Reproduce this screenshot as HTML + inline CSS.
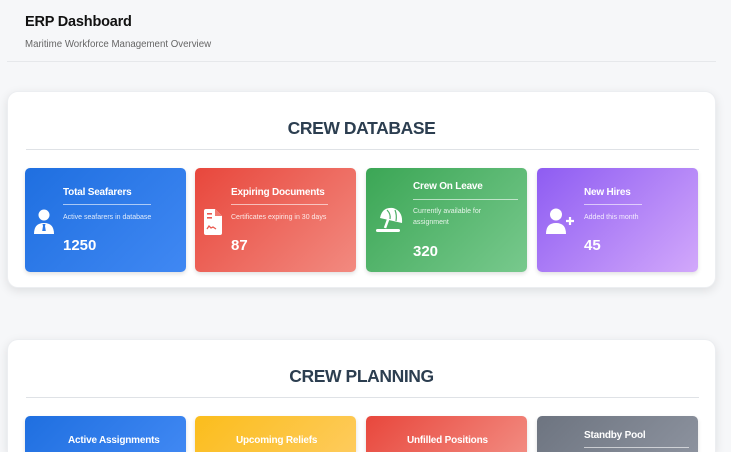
<!DOCTYPE html>
<html><head><meta charset="utf-8"><style>
*{margin:0;padding:0;box-sizing:border-box}
html,body{width:731px;height:452px;overflow:hidden}
body{background:#f6f7f9;font-family:"Liberation Sans",sans-serif;position:relative}
.a{position:absolute}
.h1{left:25px;top:14px;font-size:14.5px;font-weight:bold;color:#111;letter-spacing:-0.2px}
.sub{left:25px;top:39px;font-size:9.7px;color:#666}
.hr{left:7px;top:61px;width:709px;height:1px;background:#e6e8eb}
.panel{left:7px;width:709px;background:#fff;border-radius:11px;box-shadow:0 3px 10px rgba(0,0,0,.1);border:1px solid #eceef1}
.pt{left:0;width:100%;text-align:center;font-size:17.5px;font-weight:bold;color:#2c3e50;letter-spacing:-0.4px}
.pl{left:18px;width:673px;height:1px;background:#dfe2e6}
.card{width:161px;height:104px;border-radius:5px;color:#fff;box-shadow:0 2px 4px rgba(0,0,0,.12)}
.ct{font-size:10px;font-weight:bold;letter-spacing:-0.2px}
.ul{height:1px;background:rgba(255,255,255,.6)}
.cd{font-size:7px;color:rgba(255,255,255,.85);line-height:11px}
.cn{font-size:15px;font-weight:bold}
.blue{background:linear-gradient(135deg,#1f6fe0,#4088f3)}
.red{background:linear-gradient(135deg,#e8473c,#f28a80)}
.green{background:linear-gradient(135deg,#3ba655,#78c98d)}
.purple{background:linear-gradient(135deg,#8e5cf2,#d2a8fb)}
.yellow{background:linear-gradient(135deg,#fbbd1c,#fecb5c)}
.gray{background:linear-gradient(135deg,#6d7480,#8c929e)}
</style></head><body>
<div class="a h1">ERP Dashboard</div>
<div class="a sub">Maritime Workforce Management Overview</div>
<div class="a hr"></div>

<div class="a panel" style="top:91px;height:197px">
 <div class="a pt" style="top:26px">CREW DATABASE</div>
 <div class="a pl" style="top:57px"></div>
</div>

<div class="a card blue" style="left:25px;top:168px">
 <svg class="a" style="left:9px;top:41px" width="20" height="25" viewBox="0 0 20 25"><circle cx="10" cy="6" r="5.5" fill="#fff"/><path d="M0 25 Q0 14 10 14 Q20 14 20 25Z" fill="#fff"/><path d="M8.5 15h3l-.5 2 .8 5h-3.6l.8-5z" fill="#2a78e8"/></svg>
 <div class="a ct" style="left:38px;top:19px">Total Seafarers</div>
 <div class="a ul" style="left:38px;top:36px;width:88px"></div>
 <div class="a cd" style="left:38px;top:44px">Active seafarers in database</div>
 <div class="a cn" style="left:38px;top:69px">1250</div>
</div>
<div class="a card red" style="left:195px;top:168px">
 <svg class="a" style="left:9px;top:41px" width="18" height="26" viewBox="0 0 18 26"><path d="M0 2Q0 0 2 0H11L18 7V24Q18 26 16 26H2Q0 26 0 24Z" fill="#fff"/><path d="M11 0V7H18" fill="#f07a70"/><rect x="3" y="4" width="5" height="1.6" fill="#ea5a50"/><rect x="3" y="8" width="5" height="1.6" fill="#ea5a50"/><path d="M3 20l2-3 2 2 2-1 3 2" stroke="#ea5a50" stroke-width="1.3" fill="none"/></svg>
 <div class="a ct" style="left:36px;top:19px">Expiring Documents</div>
 <div class="a ul" style="left:36px;top:36px;width:97px"></div>
 <div class="a cd" style="left:36px;top:44px">Certificates expiring in 30 days</div>
 <div class="a cn" style="left:36px;top:69px">87</div>
</div>
<div class="a card green" style="left:366px;top:168px">
 <svg class="a" style="left:10px;top:38px" width="28" height="28" viewBox="0 0 28 28"><path d="M4 12Q6 1 17 2Q27 5 26 17Z" fill="#fff"/><path d="M13 11L9 22" stroke="#fff" stroke-width="2.5"/><rect x="0" y="23" width="24" height="3" rx="1.5" fill="#fff"/><path d="M11 4Q15 8 14 13M19 4Q21 9 20 15" stroke="#4cae64" stroke-width="1.2" fill="none"/></svg>
 <div class="a ct" style="left:47px;top:13px">Crew On Leave</div>
 <div class="a ul" style="left:47px;top:31px;width:105px"></div>
 <div class="a cd" style="left:47px;top:38px">Currently available for<br>assignment</div>
 <div class="a cn" style="left:47px;top:75px">320</div>
</div>
<div class="a card purple" style="left:537px;top:168px">
 <svg class="a" style="left:9px;top:40px" width="28" height="26" viewBox="0 0 28 26"><circle cx="10" cy="6.5" r="6" fill="#fff"/><path d="M0 26Q0 15 10 15Q20 15 20 26Z" fill="#fff"/><path d="M24 9v8M20 13h8" stroke="#fff" stroke-width="2.2"/></svg>
 <div class="a ct" style="left:47px;top:19px">New Hires</div>
 <div class="a ul" style="left:47px;top:36px;width:58px"></div>
 <div class="a cd" style="left:47px;top:44px">Added this month</div>
 <div class="a cn" style="left:47px;top:69px">45</div>
</div>

<div class="a panel" style="top:339px;height:113px;border-bottom:none;border-radius:11px 11px 0 0">
 <div class="a pt" style="top:26px">CREW PLANNING</div>
 <div class="a pl" style="top:57px"></div>
</div>
<div class="a card blue" style="left:25px;top:416px;height:36px;border-radius:5px 5px 0 0"><div class="a ct" style="left:43px;top:19px">Active Assignments</div></div>
<div class="a card yellow" style="left:195px;top:416px;height:36px;border-radius:5px 5px 0 0"><div class="a ct" style="left:41px;top:19px">Upcoming Reliefs</div></div>
<div class="a card red" style="left:366px;top:416px;height:36px;border-radius:5px 5px 0 0"><div class="a ct" style="left:41px;top:19px">Unfilled Positions</div></div>
<div class="a card gray" style="left:537px;top:416px;height:36px;border-radius:5px 5px 0 0"><div class="a ct" style="left:47px;top:14px">Standby Pool</div><div class="a ul" style="left:47px;top:31px;width:105px"></div></div>
</body></html>
